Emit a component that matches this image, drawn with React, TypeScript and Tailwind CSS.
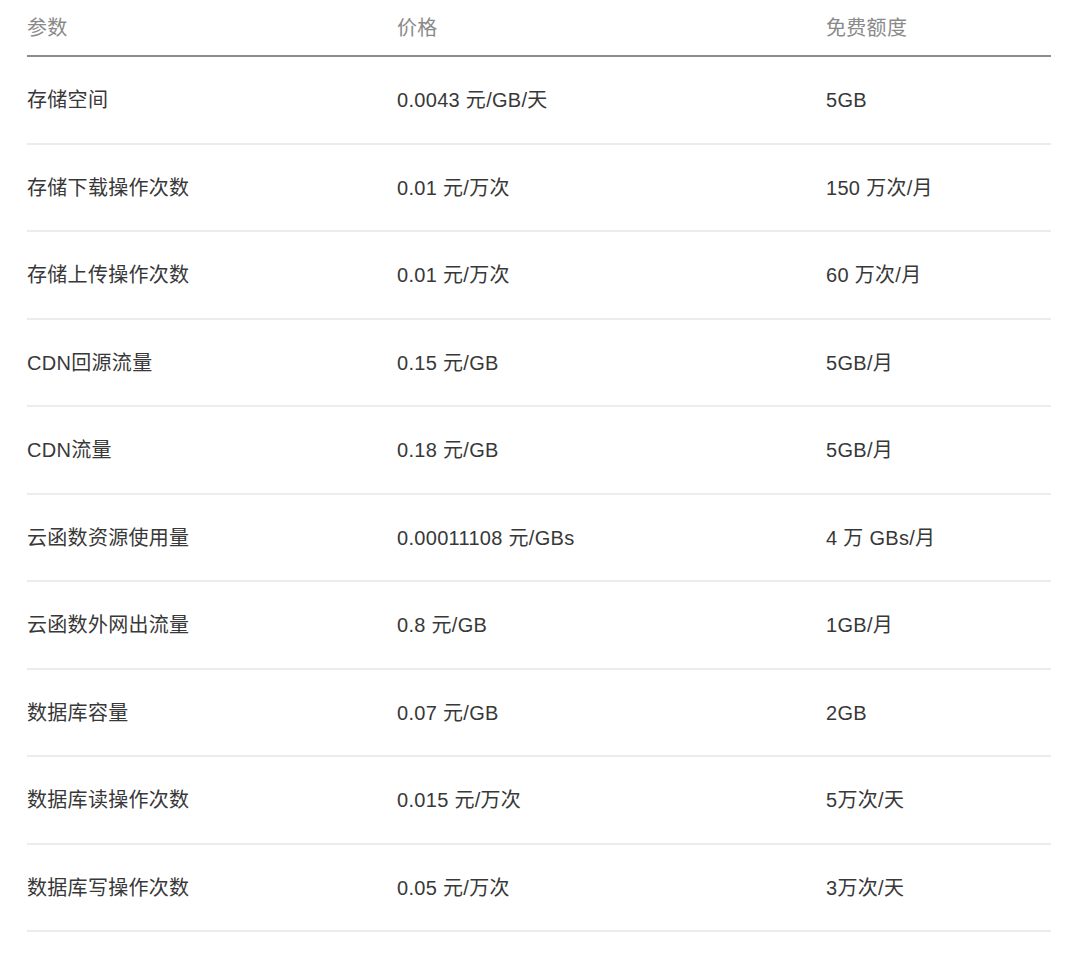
import React from "react";

const rows: [string, string, string][] = [
  ["存储空间", "0.0043 元/GB/天", "5GB"],
  ["存储下载操作次数", "0.01 元/万次", "150 万次/月"],
  ["存储上传操作次数", "0.01 元/万次", "60 万次/月"],
  ["CDN回源流量", "0.15 元/GB", "5GB/月"],
  ["CDN流量", "0.18 元/GB", "5GB/月"],
  ["云函数资源使用量", "0.00011108 元/GBs", "4 万 GBs/月"],
  ["云函数外网出流量", "0.8 元/GB", "1GB/月"],
  ["数据库容量", "0.07 元/GB", "2GB"],
  ["数据库读操作次数", "0.015 元/万次", "5万次/天"],
  ["数据库写操作次数", "0.05 元/万次", "3万次/天"],
];

export default function App() {
  return (
    <div
      className="w-[1080px] h-[961px] bg-white overflow-hidden"
      style={{ fontFamily: '"Liberation Sans", "Noto Sans CJK SC", sans-serif' }}
    >
      <div className="ml-[27px] w-[1024px]">
        <div className="grid grid-cols-[370px_429px_1fr] h-[57px] items-center border-b-2 border-[#8c8c8c] text-[20px] tracking-[0.3px] text-[#8a8a8a]">
          <div>参数</div>
          <div>价格</div>
          <div>免费额度</div>
        </div>
        {rows.map((r, i) => (
          <div
            key={i}
            className="grid grid-cols-[370px_429px_1fr] h-[87.5px] items-center pt-[1px] border-b-2 border-[#ececec] text-[20px] tracking-[0.3px] text-[#383838]"
          >
            <div>{r[0]}</div>
            <div>{r[1]}</div>
            <div>{r[2]}</div>
          </div>
        ))}
      </div>
    </div>
  );
}
